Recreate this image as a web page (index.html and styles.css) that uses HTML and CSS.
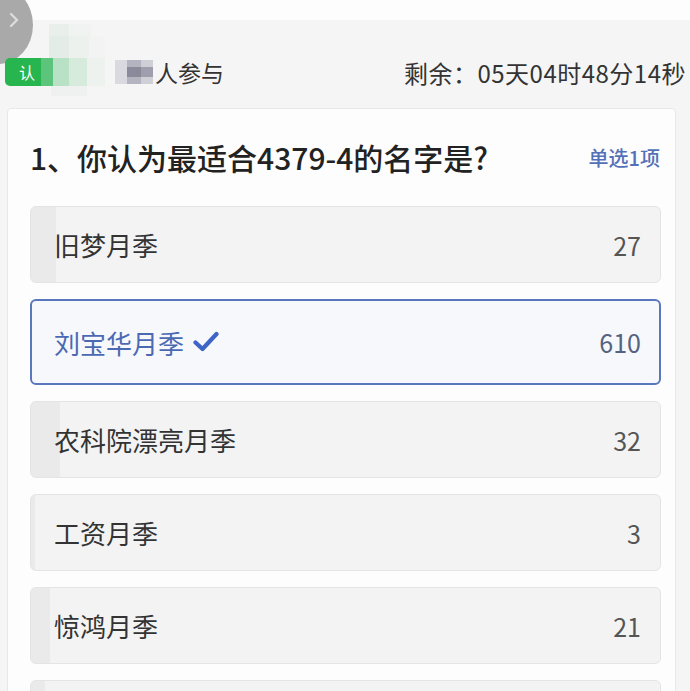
FILE: index.html
```html
<!DOCTYPE html>
<html lang="zh-CN">
<head>
<meta charset="utf-8">
<title>投票</title>
<link rel="stylesheet" href="styles.css">
</head>
<body>
<div class="topbar"></div>
<div class="back-btn">
  <svg width="14" height="16" viewBox="0 0 14 16"><path d="M4 2 L10 8 L4 14" fill="none" stroke="#dcdcdc" stroke-width="2.4" stroke-linecap="round" stroke-linejoin="round"/></svg>
</div>
<header class="header">
  <div class="participants">
    <div class="badge-wrap">
      <span class="badge">认</span>
      <svg class="mosaic" width="100" height="80" viewBox="0 0 100 80">
        <rect x="38" y="0" width="20" height="12" fill="#e9efeb"/>
        <rect x="58" y="0" width="22" height="12" fill="#f0f3f1"/>
        <rect x="38" y="12" width="20" height="22" fill="#e3ece6"/>
        <rect x="58" y="12" width="20" height="22" fill="#edf1ee"/>
        <rect x="78" y="12" width="16" height="22" fill="#f2f3f2"/>
        <rect x="30" y="34" width="12" height="28" fill="#5cc57b"/>
        <rect x="42" y="34" width="16" height="28" fill="#b9e1c5"/>
        <rect x="58" y="34" width="18" height="28" fill="#d7ebdd"/>
        <rect x="76" y="34" width="18" height="28" fill="#eef2ef"/>
        <rect x="40" y="62" width="36" height="10" fill="#eef1ef"/>
      </svg>
      <svg class="mosaic2" width="40" height="28" viewBox="0 0 40 28">
        <rect x="0" y="2" width="12" height="24" fill="#d9d9df"/>
        <rect x="12" y="2" width="14" height="24" fill="#b4b4c0"/>
        <rect x="12" y="9" width="14" height="10" fill="#8a8a9a"/>
        <rect x="26" y="2" width="12" height="24" fill="#cfcfd6"/>
        <rect x="26" y="9" width="12" height="10" fill="#9e9eac"/>
      </svg>
    </div>
    <span class="participants-text">人参与</span>
  </div>
  <div class="countdown">剩余：05天04时48分14秒</div>
</header>

<main class="card">
  <div class="question">
    <h1 class="q-title">1、你认为最适合4379-4的名字是?</h1>
    <span class="q-type">单选1项</span>
  </div>
  <ul class="options">
    <li class="option" style="--p:25px"><span class="opt-name">旧梦月季</span><span class="opt-count">27</span></li>
    <li class="option selected"><span class="opt-name">刘宝华月季<svg class="check" width="26" height="22" viewBox="0 0 26 22"><path d="M2.5 11.5 L9.5 18 L23.5 3" fill="none" stroke="#3d64c6" stroke-width="4.2" stroke-linecap="round" stroke-linejoin="round"/></svg></span><span class="opt-count">610</span></li>
    <li class="option" style="--p:29px"><span class="opt-name">农科院漂亮月季</span><span class="opt-count">32</span></li>
    <li class="option" style="--p:4px"><span class="opt-name">工资月季</span><span class="opt-count">3</span></li>
    <li class="option" style="--p:19px"><span class="opt-name">惊鸿月季</span><span class="opt-count">21</span></li>
    <li class="option" style="--p:14px"><span class="opt-name"></span><span class="opt-count"></span></li>
  </ul>
</main>
</body>
</html>
```

FILE: styles.css
```css
html, body {
  margin: 0;
  padding: 0;
}
body {
  background: #f5f5f5;
  font-family: "Noto Sans CJK SC", "Noto Sans", sans-serif;
  color: #333;
  overflow: hidden;
  height: 691px;
}
.topbar {
  height: 20px;
  background: #fdfdfd;
}
.back-btn {
  position: absolute;
  left: -35px;
  top: -14px;
  width: 68px;
  height: 78px;
  border-radius: 50%;
  background: #a9a9a9;
  display: flex;
  align-items: center;
  justify-content: flex-end;
  box-sizing: border-box;
}
.back-btn svg {
  margin-right: 12px;
  margin-top: -10px;
}
.header {
  height: 88px;
  box-sizing: border-box;
  padding: 16px 4px 0 5px;
  display: flex;
  align-items: center;
  justify-content: space-between;
}
.participants {
  display: flex;
  align-items: center;
}
.badge-wrap {
  position: relative;
  width: 150px;
  height: 28px;
}
.badge {
  position: absolute;
  left: 0;
  top: 0;
  width: 44px;
  height: 28px;
  background: #26b54e;
  border-radius: 5px 0 0 5px;
  color: #fff;
  font-size: 16px;
  line-height: 28px;
  padding-left: 14px;
  box-sizing: border-box;
}
.mosaic {
  position: absolute;
  left: 6px;
  top: -34px;
}
.mosaic2 {
  position: absolute;
  left: 110px;
  top: 0;
}
.participants-text {
  font-size: 23px;
  color: #333;
}
.countdown {
  font-size: 24px;
  color: #333;
  letter-spacing: 0.5px;
}
.card {
  margin-left: 7px;
  width: 669px;
  box-sizing: border-box;
  background: #fdfdfd;
  border: 1px solid #e8e8e8;
  border-radius: 4px;
  padding: 28px 14px 0 22px;
  height: 700px;
}
.question {
  display: flex;
  align-items: center;
  justify-content: space-between;
  height: 40px;
  margin-bottom: 29px;
}
.q-title {
  margin: 0;
  font-size: 30px;
  font-weight: 500;
  color: #222;
  line-height: 40px;
}
.q-type {
  font-size: 20px;
  font-weight: 500;
  color: #5371b9;
  margin-right: 1px;
}
.options {
  list-style: none;
  margin: 0;
  padding: 0;
  display: flex;
  flex-direction: column;
  gap: 16px;
}
.option {
  height: 77px;
  box-sizing: border-box;
  border: 1px solid #e4e4e4;
  border-radius: 6px;
  background: linear-gradient(to right, #eaeaea var(--p), #f3f3f3 var(--p));
  display: flex;
  align-items: center;
  justify-content: space-between;
  padding: 0 19px 0 23px;
  font-size: 26px;
}
.opt-name {
  color: #333;
  display: flex;
  align-items: center;
}
.opt-count {
  color: #555;
  font-size: 25px;
}
.option.selected {
  height: 86px;
  border: 2px solid #5a77bd;
  background: #f7f8fb;
  padding: 0 18px 0 22px;
}
.option.selected .opt-name {
  color: #4b69b3;
}
.option.selected .opt-count {
  color: #54637f;
}
.check {
  margin-left: 9px;
}
```
